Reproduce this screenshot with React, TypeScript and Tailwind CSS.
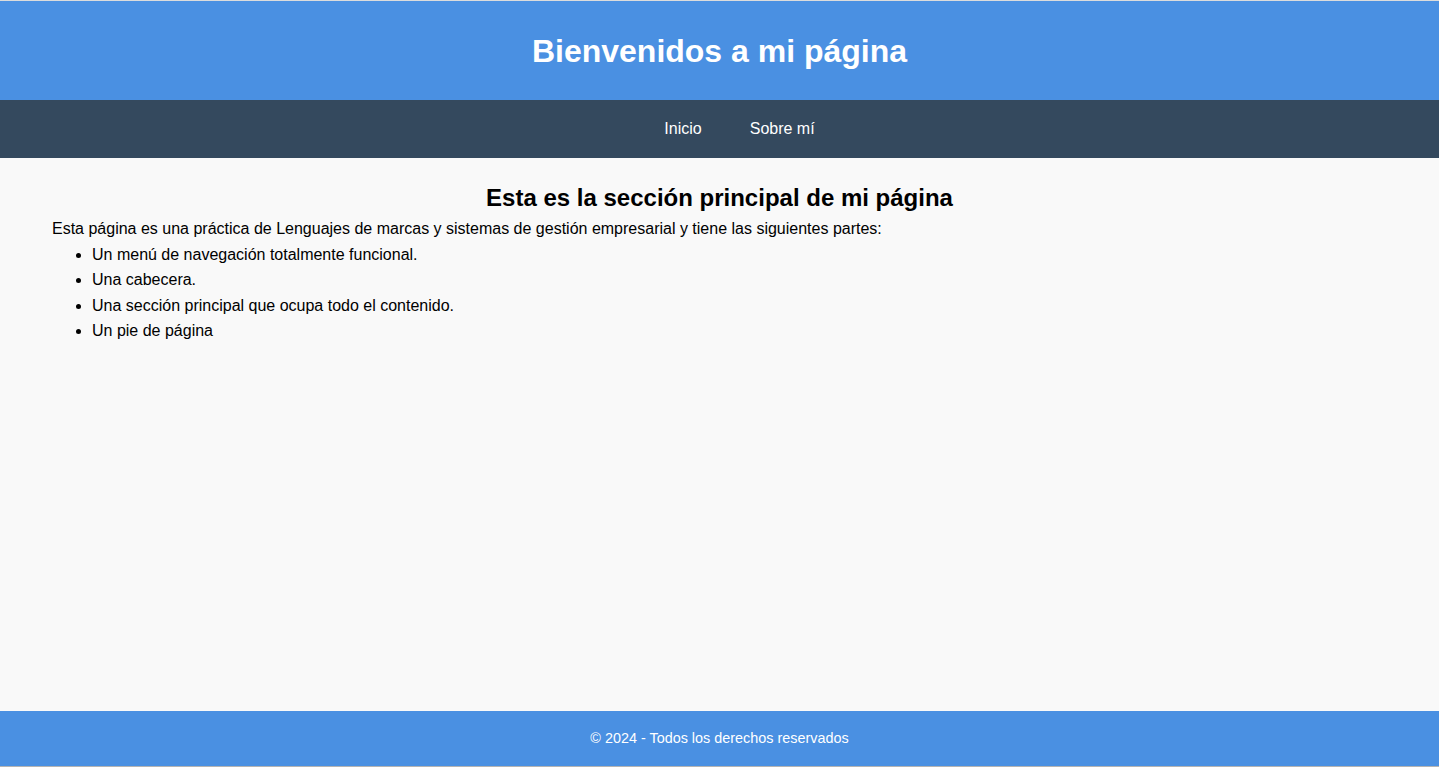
export default function App() {
  return (
    <div className="flex h-[767px] flex-col font-['Liberation_Sans',Arial,sans-serif] text-black">
      <div className="h-px bg-[#dcdcdc]" />
      <header className="flex h-[99px] items-center justify-center bg-[#4a90e2]">
        <h1 className="text-[32px] font-bold leading-none text-white">Bienvenidos a mi página</h1>
      </header>
      <nav className="flex h-[58px] items-center justify-center bg-[#34495e] text-[16px] text-white">
        <ul className="flex gap-12 pl-[40px]">
          <li><a href="#">Inicio</a></li>
          <li><a href="#">Sobre mí</a></li>
        </ul>
      </nav>
      <main className="flex-1 bg-[#f9f9f9] px-[52px] pt-[21px]">
        <h2 className="text-center text-[24px] font-bold leading-[37px]">
          Esta es la sección principal de mi página
        </h2>
        <p className="text-[16px] leading-[25.6px]">
          Esta página es una práctica de Lenguajes de marcas y sistemas de gestión empresarial y tiene las siguientes partes:
        </p>
        <ul className="list-disc pl-[40px] text-[16px] leading-[25.6px]">
          <li>Un menú de navegación totalmente funcional.</li>
          <li>Una cabecera.</li>
          <li>Una sección principal que ocupa todo el contenido.</li>
          <li>Un pie de página</li>
        </ul>
      </main>
      <footer className="flex h-[55px] items-center justify-center bg-[#4a90e2] text-[14.4px] text-white">
        © 2024 - Todos los derechos reservados
      </footer>
      <div className="h-px bg-[#b4b4b4]" />
    </div>
  );
}
